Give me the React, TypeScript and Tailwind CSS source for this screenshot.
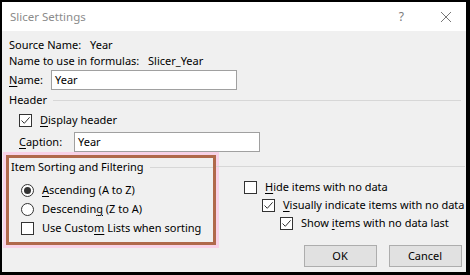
import React from 'react';

const font = { fontFamily: '"Noto Sans", "Open Sans", sans-serif' };

const U = ({ children }: { children: React.ReactNode }) => <span className="underline underline-offset-2">{children}</span>;

const CheckBox = ({ checked }: { checked?: boolean }) => (
  <span className="w-[13px] h-[13px] shrink-0 border border-[#333] bg-white flex items-center justify-center">
    {checked && (
      <svg width="11" height="11" viewBox="0 0 11 11" fill="none">
        <path d="M1.5 5.5l2.8 2.8 5.3-6" stroke="#333" strokeWidth="1" />
      </svg>
    )}
  </span>
);

const Radio = ({ checked }: { checked?: boolean }) => (
  <span className="w-[13px] h-[13px] shrink-0 rounded-full border border-[#333] bg-white flex items-center justify-center">
    {checked && <span className="w-[7px] h-[7px] rounded-full bg-[#333]" />}
  </span>
);

export default function App() {
  return (
    <div
      className="w-[470px] h-[275px] bg-black border-l-2 border-t-2 border-r-4 border-b-[3px] border-black flex flex-col text-[11px] leading-[16px] text-black whitespace-nowrap"
      style={font}
    >
      {/* title bar */}
      <div className="h-[29px] bg-white flex items-center pl-[8px] pr-[14px] shrink-0">
        <span className="text-[#8b8b8b] text-[11.5px]">Slicer Settings</span>
        <span className="ml-auto text-[#7a7a7a] text-[12px] mr-[36px]">?</span>
        <svg width="12" height="12" viewBox="0 0 12 12" fill="none">
          <path d="M1 1l10 10M11 1L1 11" stroke="#777" strokeWidth="1" />
        </svg>
      </div>

      {/* body */}
      <div className="flex-1 bg-[#f0f0f0] pt-[6px] pl-[7px] pr-[5px] flex flex-col">
        <div className="flex">
          <span className="w-[81px]">Source Name:</span>
          <span>Year</span>
        </div>
        <div className="flex">
          <span className="w-[139px]">Name to use in formulas:</span>
          <span>Slicer_Year</span>
        </div>
        <div className="flex items-center mt-[1px]">
          <span className="w-[42px]"><U>N</U>ame:</span>
          <div className="w-[186px] h-[20px] bg-white border border-[#a0a0a0] pl-[3px] flex items-center">Year</div>
        </div>
        <div className="flex items-center mt-[2px]">
          <span>Header</span>
          <div className="flex-1 border-t border-[#d7d7d7] ml-[6px]" />
        </div>
        <div className="flex items-center gap-[8px] mt-[4px] pl-[10px]">
          <CheckBox checked />
          <span><U>D</U>isplay header</span>
        </div>
        <div className="flex items-center mt-[4px] pl-[10px]">
          <span className="w-[55px]"><U>C</U>aption:</span>
          <div className="w-[186px] h-[20px] bg-white border border-[#a0a0a0] pl-[3px] flex items-center">Year</div>
        </div>

        {/* sorting section */}
        <div className="flex mt-[3px] -ml-[3px]">
          <div className="w-[210px] h-[90px] border-[3px] border-[#b0694b] shadow-[0_0_0_3px_#f8d2e7] pt-[1px] pl-[2px] flex flex-col shrink-0">
            <div className="flex items-center">
              <span>Item Sorting and Filtering</span>
              <div className="flex-1 border-t border-[#d7d7d7] ml-[6px]" />
            </div>
            <div className="flex flex-col gap-[3px] mt-[7px] pl-[10px]">
              <div className="flex items-center gap-[8px]">
                <Radio checked />
                <span><U>A</U>scending (A to Z)</span>
              </div>
              <div className="flex items-center gap-[8px]">
                <Radio />
                <span>Descendin<U>g</U> (Z to A)</span>
              </div>
              <div className="flex items-center gap-[8px]">
                <CheckBox />
                <span>Use Custo<U>m</U> Lists when sorting</span>
              </div>
            </div>
          </div>

          <div className="flex-1 flex flex-col">
            <div className="border-t border-[#d7d7d7] mt-[11px]" />
            <div className="flex flex-col gap-[2px] mt-[12px] pl-[28px]">
              <div className="flex items-center gap-[8px]">
                <CheckBox />
                <span><U>H</U>ide items with no data</span>
              </div>
              <div className="flex items-center gap-[8px] pl-[18px]">
                <CheckBox checked />
                <span><U>V</U>isually indicate items with no data</span>
              </div>
              <div className="flex items-center gap-[8px] pl-[36px]">
                <CheckBox checked />
                <span>Show <U>i</U>tems with no data last</span>
              </div>
            </div>
            <div className="flex justify-end gap-[12px] mt-[14px] pr-[3px]">
              <button className="w-[73px] h-[22px] bg-[#e1e1e1] border border-[#adadad] text-[11px]">OK</button>
              <button className="w-[73px] h-[22px] bg-[#e1e1e1] border border-[#adadad] text-[11px]">Cancel</button>
            </div>
          </div>
        </div>
      </div>
    </div>
  );
}
